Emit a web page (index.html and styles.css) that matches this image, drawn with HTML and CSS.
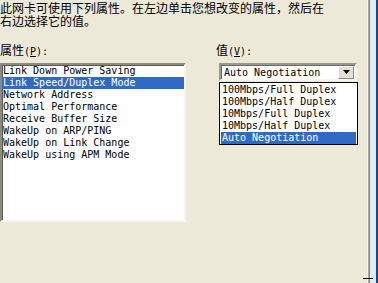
FILE: index.html
```html
<!DOCTYPE html>
<html lang="zh-CN">
<head>
  <meta charset="UTF-8" />
  <title>高级属性</title>
  <link rel="stylesheet" href="styles.css">
</head>
<body>

  <div class="window">
    <div class="page">
      <p class="intro">此网卡可使用下列属性。在左边单击您想改变的属性，然后在<br>右边选择它的值。</p>

      <div class="props">
        <!-- property list -->
        <div class="col-list">
          <div class="label"><span class="cjk">属性</span>(<u>P</u>):</div>
          <ul class="listbox">
            <li>Link Down Power Saving</li>
            <li class="selected">Link Speed/Duplex Mode</li>
            <li>Network Address</li>
            <li>Optimal Performance</li>
            <li>Receive Buffer Size</li>
            <li>WakeUp on ARP/PING</li>
            <li>WakeUp on Link Change</li>
            <li>WakeUp using APM Mode</li>
          </ul>
        </div>

        <!-- value combo -->
        <div class="col-value">
          <div class="label"><span class="cjk">值</span>(<u>V</u>):</div>
          <div class="combo">
            <span class="combo-text">Auto Negotiation</span>
            <span class="combo-btn">
              <svg width="7" height="4" viewBox="0 0 7 4"><path d="M0 0h7L3.5 4z" fill="#000"/></svg>
            </span>
            <ul class="dropdown">
              <li>100Mbps/Full Duplex</li>
              <li>100Mbps/Half Duplex</li>
              <li>10Mbps/Full Duplex</li>
              <li>10Mbps/Half Duplex</li>
              <li class="selected">Auto Negotiation</li>
            </ul>
          </div>
        </div>
      </div>
    </div>
    <div class="frame"></div>
    <div class="grip"></div>
  </div>

</body>
</html>
```

FILE: styles.css
```css
body {
  margin: 0;
  background-color: #ece9d8;
  color: #000;
  font-family: 'DejaVu Sans Mono', 'Noto Sans CJK SC', monospace;
  font-size: 12px;
}

.window {
  position: relative;
  width: 378px;
  height: 283px;
  display: flex;
  overflow: hidden;
}

.page {
  flex: 1;
}

.intro {
  margin: 0;
  padding-top: 3px;
  line-height: 13px;
  font-family: 'Liberation Sans', 'Noto Sans CJK SC', sans-serif;
}

.props {
  display: flex;
  margin-top: 16px;
}

.label {
  height: 13px;
  line-height: 13px;
  margin-bottom: 5px;
  font-family: 'DejaVu Sans Mono', 'Noto Sans CJK SC', monospace;
  font-size: 10px;
}

.cjk {
  font-family: 'Liberation Sans', 'Noto Sans CJK SC', sans-serif;
  font-size: 12px;
}

.col-list {
  width: 186px;
}

.col-value {
  margin-left: 30px;
}

ul {
  list-style: none;
  margin: 0;
  padding: 0;
}

.listbox {
  box-sizing: border-box;
  width: 186px;
  height: 159px;
  background-color: #fff;
  border: 2px solid;
  border-color: #8d8b7f #f6f5ee #f6f5ee #8d8b7f;
  box-shadow: inset 1px 1px 0 #5e5c52;
  font-size: 10px;
  line-height: 12px;
}

.listbox li {
  padding-left: 1px;
  white-space: nowrap;
}

.selected {
  background-color: #316ac5;
  color: #fff;
}

.combo {
  position: relative;
  box-sizing: border-box;
  width: 138px;
  height: 18px;
  margin-left: 3px;
  display: flex;
  align-items: center;
  background-color: #fff;
  border: 2px solid;
  border-color: #9a988c #f6f5ee #f6f5ee #9a988c;
  box-shadow: inset 1px 1px 0 #6e6c62;
  font-size: 10px;
}

.combo-text {
  flex: 1;
  padding-left: 3px;
  padding-top: 1px;
}

.combo-btn {
  box-sizing: border-box;
  width: 16px;
  height: 13px;
  margin-right: 1px;
  display: flex;
  align-items: center;
  justify-content: center;
  background-color: #e4e2d6;
  border: 1px solid;
  border-color: #fff #8d8b7f #8d8b7f #fff;
}

.dropdown {
  position: absolute;
  top: 17px;
  left: -2px;
  box-sizing: border-box;
  width: 139px;
  background-color: #fff;
  border: 1px solid #000;
  padding: 1px 1px 0;
  font-size: 10px;
  line-height: 12px;
}

.dropdown li {
  padding-left: 1px;
  white-space: nowrap;
}

.frame {
  width: 11px;
  border-left: 1px solid #f6f5ee;
  box-sizing: border-box;
  background: linear-gradient(to right, #aeaca1 0 1px, #8a897f 1px 2px, #e3e9f5 2px 8px, #1a4594 8px);
}

.grip {
  position: absolute;
  right: 5px;
  bottom: 4px;
  width: 10px;
  height: 1px;
  background-color: #000;
}
```
